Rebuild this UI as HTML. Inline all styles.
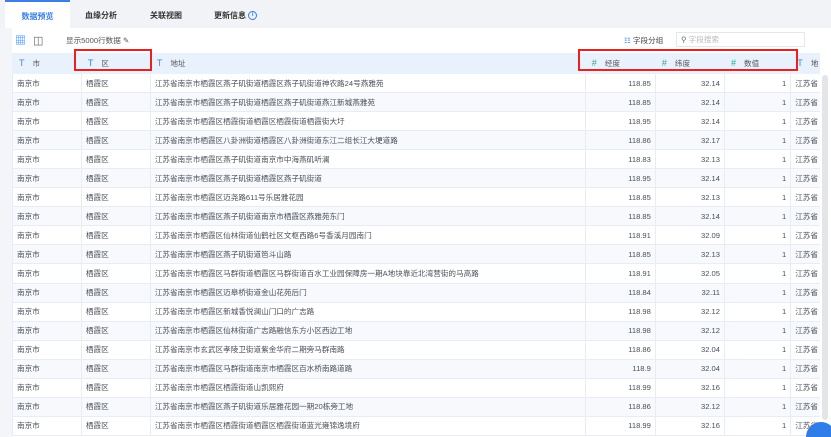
<!DOCTYPE html>
<html><head><meta charset="utf-8"><style>
*{margin:0;padding:0;box-sizing:border-box}
html,body{width:831px;height:437px;overflow:hidden}
body{background:#fff;font-family:"Liberation Sans","Noto Sans CJK SC",sans-serif;font-size:7.6px;color:#4a4f59;position:relative}
.tabs{position:absolute;left:0;top:0;width:831px;height:28px;background:#f2f3f7}
.tab{position:absolute;top:0;height:28px;line-height:32px;font-size:8px;font-weight:bold;color:#333}
.tab.act{background:#fff;color:#3d7ee6;border-top:2px solid #3d7ee6;line-height:30px;text-align:center}
.tb{position:absolute;top:29px;height:24px;line-height:24px}
table{position:absolute;left:12px;top:53px;border-collapse:collapse;table-layout:fixed}
td{height:19.05px;border:1px solid #e8edf5;padding:0 4px;white-space:nowrap;overflow:hidden;vertical-align:middle}
tr.h td{height:20px;background:#e9f1fc;border-color:#e9f1fc;color:#555}
tr:nth-child(odd):not(.h) td{background:#f7f9fc}
.n{text-align:right}
.T{color:#3d86e6;font-size:9px;margin:0 8px 0 2px}
.S{color:#29a89a;font-size:9px;margin:0 8px 0 2px}
.red{position:absolute;border:2px solid #e8231f}
</style></head><body>
<div style="position:absolute;left:0;top:28px;width:12px;height:409px;background:#f4f5f8"></div>
<div class="tabs">
<div class="tab act" style="left:5px;width:65px">数据预览</div>
<div class="tab" style="left:85px">血缘分析</div>
<div class="tab" style="left:150px">关联视图</div>
<div class="tab" style="left:214px">更新信息 <span style="display:inline-block;width:9px;height:9px;border:1px solid #3d7ee6;border-radius:50%;color:#3d7ee6;font-size:6px;line-height:7px;text-align:center;vertical-align:middle">i</span></div>
</div>
<div class="tb" style="left:15px;color:#3d7ee6;font-size:11px">&#9638;</div>
<div class="tb" style="left:33px;font-size:11px;color:#666">&#9707;</div>
<div class="tb" style="left:66px;color:#555">显示5000行数据 ✎</div>
<div class="tb" style="left:624px;color:#444"><span style="color:#3d7ee6">&#9783;</span> 字段分组</div>
<div style="position:absolute;left:676px;top:32px;width:129px;height:15px;border:1px solid #e4e7ec;color:#bbb;line-height:13px;padding-left:4px"><span style="color:#666">&#9906;</span> 字段搜索</div>
<table>
<colgroup><col style="width:70px"><col style="width:70px"><col style="width:438px"><col style="width:71px"><col style="width:70px"><col style="width:67px"><col style="width:40px"></colgroup>
<tr class="h"><td><span class="T">T</span>市</td><td><span class="T">T</span>区</td><td><span class="T">T</span>地址</td><td><span class="S">#</span>经度</td><td><span class="S">#</span>纬度</td><td><span class="S">#</span>数值</td><td><span class="T">T</span>地</td></tr>
<tr><td>南京市</td><td>栖霞区</td><td>江苏省南京市栖霞区燕子矶街道栖霞区燕子矶街道神农路24号燕雅苑</td><td class="n">118.85</td><td class="n">32.14</td><td class="n">1</td><td>江苏省</td></tr>
<tr><td>南京市</td><td>栖霞区</td><td>江苏省南京市栖霞区燕子矶街道栖霞区燕子矶街道燕江新城燕雅苑</td><td class="n">118.85</td><td class="n">32.14</td><td class="n">1</td><td>江苏省</td></tr>
<tr><td>南京市</td><td>栖霞区</td><td>江苏省南京市栖霞区栖霞街道栖霞区栖霞街道栖霞街大圩</td><td class="n">118.95</td><td class="n">32.14</td><td class="n">1</td><td>江苏省</td></tr>
<tr><td>南京市</td><td>栖霞区</td><td>江苏省南京市栖霞区八卦洲街道栖霞区八卦洲街道东江二组长江大埂道路</td><td class="n">118.86</td><td class="n">32.17</td><td class="n">1</td><td>江苏省</td></tr>
<tr><td>南京市</td><td>栖霞区</td><td>江苏省南京市栖霞区燕子矶街道南京市中海燕矶听澜</td><td class="n">118.83</td><td class="n">32.13</td><td class="n">1</td><td>江苏省</td></tr>
<tr><td>南京市</td><td>栖霞区</td><td>江苏省南京市栖霞区燕子矶街道栖霞区燕子矶街道</td><td class="n">118.95</td><td class="n">32.14</td><td class="n">1</td><td>江苏省</td></tr>
<tr><td>南京市</td><td>栖霞区</td><td>江苏省南京市栖霞区迈尧路611号乐居雅花园</td><td class="n">118.85</td><td class="n">32.13</td><td class="n">1</td><td>江苏省</td></tr>
<tr><td>南京市</td><td>栖霞区</td><td>江苏省南京市栖霞区燕子矶街道南京市栖霞区燕雅苑东门</td><td class="n">118.85</td><td class="n">32.14</td><td class="n">1</td><td>江苏省</td></tr>
<tr><td>南京市</td><td>栖霞区</td><td>江苏省南京市栖霞区仙林街道仙鹤社区文枢西路6号香溪月园南门</td><td class="n">118.91</td><td class="n">32.09</td><td class="n">1</td><td>江苏省</td></tr>
<tr><td>南京市</td><td>栖霞区</td><td>江苏省南京市栖霞区燕子矶街道笆斗山路</td><td class="n">118.85</td><td class="n">32.13</td><td class="n">1</td><td>江苏省</td></tr>
<tr><td>南京市</td><td>栖霞区</td><td>江苏省南京市栖霞区马群街道栖霞区马群街道百水工业园保障房一期A地块靠近北湾营街的马高路</td><td class="n">118.91</td><td class="n">32.05</td><td class="n">1</td><td>江苏省</td></tr>
<tr><td>南京市</td><td>栖霞区</td><td>江苏省南京市栖霞区迈皋桥街道金山花苑后门</td><td class="n">118.84</td><td class="n">32.11</td><td class="n">1</td><td>江苏省</td></tr>
<tr><td>南京市</td><td>栖霞区</td><td>江苏省南京市栖霞区新城香悦澜山门口的广志路</td><td class="n">118.98</td><td class="n">32.12</td><td class="n">1</td><td>江苏省</td></tr>
<tr><td>南京市</td><td>栖霞区</td><td>江苏省南京市栖霞区仙林街道广志路融信东方小区西边工地</td><td class="n">118.98</td><td class="n">32.12</td><td class="n">1</td><td>江苏省</td></tr>
<tr><td>南京市</td><td>栖霞区</td><td>江苏省南京市玄武区孝陵卫街道紫金华府二期旁马群南路</td><td class="n">118.86</td><td class="n">32.04</td><td class="n">1</td><td>江苏省</td></tr>
<tr><td>南京市</td><td>栖霞区</td><td>江苏省南京市栖霞区马群街道南京市栖霞区百水桥南路道路</td><td class="n">118.9</td><td class="n">32.04</td><td class="n">1</td><td>江苏省</td></tr>
<tr><td>南京市</td><td>栖霞区</td><td>江苏省南京市栖霞区栖霞街道山凯熙府</td><td class="n">118.99</td><td class="n">32.16</td><td class="n">1</td><td>江苏省</td></tr>
<tr><td>南京市</td><td>栖霞区</td><td>江苏省南京市栖霞区燕子矶街道乐居雅花园一期20栋旁工地</td><td class="n">118.86</td><td class="n">32.12</td><td class="n">1</td><td>江苏省</td></tr>
<tr><td>南京市</td><td>栖霞区</td><td>江苏省南京市栖霞区栖霞街道栖霞区栖霞街道蓝光雍锦逸境府</td><td class="n">118.99</td><td class="n">32.16</td><td class="n">1</td><td>江苏省</td></tr>
</table>
<div style="position:absolute;left:820px;top:53px;width:11px;height:384px;background:#fff"></div>
<div style="position:absolute;left:822px;top:75px;width:6px;height:345px;background:#e3e5e9;border-radius:3px"></div>
<div style="position:absolute;left:806px;top:422px;width:30px;height:30px;border-radius:50%;background:#2f7de8"></div>
<div class="red" style="left:74px;top:49px;width:78px;height:22px"></div>
<div class="red" style="left:578px;top:49px;width:220px;height:22px"></div>
</body></html>
